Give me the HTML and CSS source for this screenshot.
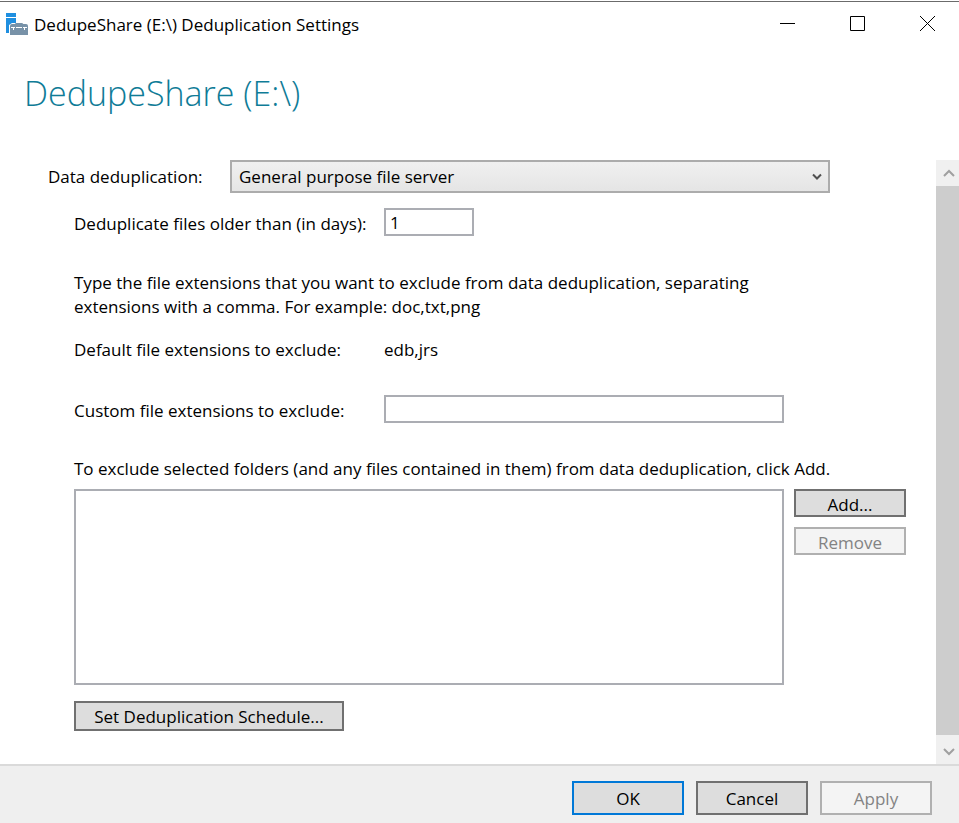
FILE: index.html
```html
<!DOCTYPE html>
<html lang="en">
<head>
    <meta charset="UTF-8">
    <meta name="viewport" content="width=device-width, initial-scale=1.0">
    <title>DedupeShare (E:\) Deduplication Settings</title>
    <link rel="stylesheet" href="styles.css">
</head>
<body>
<form class="window">
    <header class="title-bar">
        <svg class="app-icon" width="24" height="24" viewBox="0 0 24 24">
            <path fill="#1f8fe0" d="M1 1h10v4H1zM1 6h10v5H7l-3 2v8H1z"/>
            <path fill="#7892a8" d="M5 14q0-2 2-2h14q2 0 2 2v9H5z"/>
            <path fill="none" stroke="#7892a8" d="M10 12.500q0-1 1-1h6q1 0 1 1"/>
            <path fill="none" stroke="#fff" d="M6 15.500h4M11 15.500h6M18 15.500h4M8.500 15v3M19.500 15v3"/>
        </svg>
        <span class="title">DedupeShare (E:\) Deduplication Settings</span>
        <div class="window-buttons">
            <button type="button" aria-label="Minimize">
                <svg width="16" height="16" viewBox="0 0 16 16"><path d="M0 7.500h15"/></svg>
            </button>
            <button type="button" aria-label="Maximize">
                <svg width="16" height="16" viewBox="0 0 16 16"><path d="M.5.500h14v14H.5z"/></svg>
            </button>
            <button type="button" aria-label="Close">
                <svg width="16" height="16" viewBox="0 0 16 16"><path d="M0 0l15 15M15 0L0 15"/></svg>
            </button>
        </div>
    </header>

    <h1>DedupeShare (E:\)</h1>

    <div class="scroll-view">
        <main class="settings">
            <div class="mode-row">
                <label for="mode">Data deduplication:</label>
                <div class="select-box">
                    <select id="mode">
                        <option>General purpose file server</option>
                    </select>
                    <svg class="select-arrow" width="10" height="8" viewBox="0 0 10 8"><path d="M1 1.500l4 4 4-4"/></svg>
                </div>
            </div>

            <div class="options">
                <div class="field">
                    <label for="days">Deduplicate files older than (in days):</label>
                    <input type="text" id="days" class="days" value="1">
                </div>
                <p class="hint">Type the file extensions that you want to exclude from data deduplication, separating extensions with a comma. For example: doc,txt,png</p>
                <div class="field">
                    <span>Default file extensions to exclude:</span>
                    <span>edb,jrs</span>
                </div>
                <div class="field custom">
                    <label for="custom">Custom file extensions to exclude:</label>
                    <input type="text" id="custom">
                </div>
                <p class="folders-label" id="folders-label">To exclude selected folders (and any files contained in them) from data deduplication, click Add.</p>
                <div class="folders">
                    <div class="folder-list" role="listbox" aria-labelledby="folders-label"></div>
                    <div class="folder-buttons">
                        <button type="button" class="btn">Add...</button>
                        <button type="button" class="btn" disabled>Remove</button>
                    </div>
                </div>
                <button type="button" class="btn schedule">Set Deduplication Schedule...</button>
            </div>
        </main>

        <div class="scrollbar">
            <button type="button" aria-label="Scroll up">
                <svg width="12" height="8" viewBox="0 0 12 8"><path d="M1 7l5-5 5 5"/></svg>
            </button>
            <div class="thumb"></div>
            <button type="button" class="down" aria-label="Scroll down">
                <svg width="12" height="8" viewBox="0 0 12 8"><path d="M1 1l5 5 5-5"/></svg>
            </button>
        </div>
    </div>

    <footer class="footer">
        <button type="button" class="btn default">OK</button>
        <button type="button" class="btn">Cancel</button>
        <button type="button" class="btn" disabled>Apply</button>
    </footer>
</form>
</body>
</html>
```
FILE: styles.css
```css
body {
    margin: 0;
    background: #fff;
    color: #000;
    font-family: "Open Sans", "Noto Sans", sans-serif;
    font-size: 17px;
    line-height: 24px;
}
button, input, select {
    font: inherit;
    color: inherit;
    box-sizing: border-box;
    margin: 0;
    border-radius: 0;
}
svg {
    display: block;
    fill: none;
}
.window {
    display: flex;
    flex-direction: column;
    box-sizing: border-box;
    min-height: 100vh;
    padding-top: 1px;
}

/* title bar */
.title-bar {
    display: flex;
    align-items: center;
    height: 44px;
    padding-left: 5px;
    border-top: 1px solid #6b6b6b;
}
.title {
    margin-left: 5px;
    padding-top: 2px;
}
.window-buttons {
    display: flex;
    margin-left: auto;
}
.window-buttons button {
    display: flex;
    align-items: center;
    justify-content: center;
    width: 70px;
    height: 44px;
    padding: 0;
    border: none;
    background: none;
}
.window-buttons svg {
    stroke: #000;
}
.window-buttons button:last-child {
    margin-right: -4px;
}
h1 {
    margin: 23px 24px 43px;
    color: #0f7c97;
    font-size: 34px;
    font-weight: 300;
    line-height: 48px;
}

/* content */
.scroll-view {
    display: flex;
    flex: 1;
}
.settings {
    flex: 1;
    padding: 0 30px 33px 48px;
}
.mode-row {
    display: flex;
    align-items: center;
    margin-bottom: 15px;
}
.mode-row label {
    width: 182px;
}
.select-box {
    position: relative;
    flex: 1;
    max-width: 600px;
}
.select-box select {
    display: block;
    width: 100%;
    height: 33px;
    padding: 0 30px 0 7px;
    border: 2px solid #acacac;
    background: linear-gradient(#f0f0f0, #e5e5e5);
    appearance: none;
}
.select-arrow {
    position: absolute;
    top: 13px;
    right: 8px;
    stroke: #505050;
    stroke-width: 2;
    pointer-events: none;
}
.options {
    padding-left: 26px;
}
.field {
    display: grid;
    grid-template-columns: 310px minmax(0, 400px);
    align-items: end;
}
.field input {
    width: 100%;
    height: 28px;
    padding: 0 4px;
    border: 2px solid #abadb3;
    background: #fff;
}
.field input.days {
    width: 90px;
}
.hint {
    max-width: 710px;
    margin: 35px 0 19px;
}
.custom {
    margin-top: 33px;
}
.folders-label {
    margin: 34px 0 8px;
}
.folders {
    display: flex;
    gap: 10px;
}
.folder-list {
    flex: 1;
    box-sizing: border-box;
    height: 196px;
    border: 2px solid #abadb3;
}
.folder-buttons {
    display: flex;
    flex-direction: column;
    gap: 10px;
}
.btn {
    width: 112px;
    height: 28px;
    padding: 2px 0 0;
    border: 2px solid #707070;
    background: #ddd;
}
.btn:disabled {
    border-color: #b0b0b0;
    background: #f4f4f4;
    color: #838383;
}
.btn.schedule {
    display: block;
    width: 270px;
    height: 30px;
    margin-top: 16px;
}

/* scrollbar */
.scrollbar {
    display: flex;
    flex-direction: column;
    width: 23px;
    background: #f0f0f0;
}
.scrollbar button {
    display: flex;
    align-items: center;
    justify-content: center;
    height: 26px;
    padding: 0 0 0 3px;
    border: none;
    background: none;
}
.scrollbar .down {
    height: 29px;
    padding-top: 5px;
}
.scrollbar svg {
    stroke: #a0a0a0;
    stroke-width: 2;
}
.thumb {
    flex: 1;
    background: #cdcdcd;
}

/* footer */
.footer {
    display: flex;
    justify-content: flex-end;
    gap: 12px;
    padding: 15px 27px 8px;
    border-top: 2px solid #dadada;
    background: #efefef;
}
.footer .btn {
    height: 34px;
}
.btn.default {
    border-color: #0078d7;
}
```
